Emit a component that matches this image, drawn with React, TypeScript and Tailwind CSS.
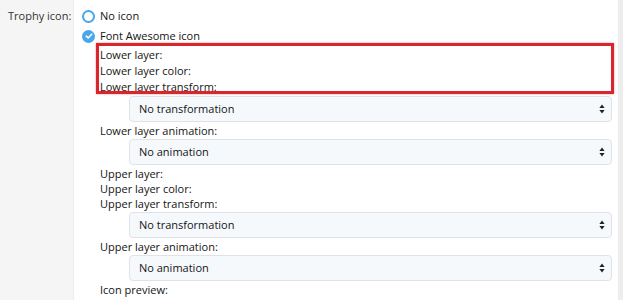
import React from 'react';

const font = { fontFamily: '"Open Sans", "Noto Sans", sans-serif' };

const Select = ({ value }: { value: string }) => (
  <div className="ml-[29px] mr-[6px] my-px h-[26px] flex items-center justify-between pl-[9px] pr-[6px] bg-[#f6f9fc] border border-[#dfe3e8] rounded-[4px] text-[11px] text-[#141414]">
    <span>{value}</span>
    <svg width="6" height="10" viewBox="0 0 6 10" className="fill-[#222]">
      <path d="M3 0.5 L5.6 4 L0.4 4 Z" />
      <path d="M3 9.5 L5.6 6 L0.4 6 Z" />
    </svg>
  </div>
);

const Line = ({ children, tall }: { children: React.ReactNode; tall?: boolean }) => (
  <div className={`${tall ? 'h-[16px] leading-[16px]' : 'h-[15px] leading-[15px]'} whitespace-nowrap text-[11px] text-[#141414]`}>
    {children}
  </div>
);

export default function App() {
  return (
    <div className="relative flex w-[623px] h-[300px] bg-white overflow-hidden" style={font}>
      <div className="w-[74px] shrink-0 bg-[#f5f5f5] border-r border-[#ececec] pl-[8px] pt-[8px]">
        <div className="h-[16px] leading-[16px] whitespace-nowrap text-[11px] text-[#333]">Trophy icon:</div>
      </div>

      <div className="flex-1 pt-[8px] pl-[8px]">
        <div className="flex items-center gap-[5px] h-[16px] text-[11px] text-[#141414]">
          <span className="w-[13px] h-[13px] rounded-full border-2 border-[#47a7eb] bg-white" />
          <span>No icon</span>
        </div>
        <div className="flex items-center gap-[5px] h-[16px] mt-[4px] text-[11px] text-[#141414]">
          <span className="w-[13px] h-[13px] rounded-full bg-[#47a7eb] flex items-center justify-center">
            <svg width="8" height="8" viewBox="0 0 8 8">
              <path d="M1.3 4.2 L3.2 6 L6.7 2.2" fill="none" stroke="white" strokeWidth="1.6" strokeLinecap="round" strokeLinejoin="round" />
            </svg>
          </span>
          <span>Font Awesome icon</span>
        </div>

        <div className="pl-[18px] mt-[3px]">
          <Line tall>Lower layer:</Line>
          <Line tall>Lower layer color:</Line>
          <Line tall>Lower layer transform:</Line>
          <Select value="No transformation" />
          <Line>Lower layer animation:</Line>
          <Select value="No animation" />
          <Line>Upper layer:</Line>
          <Line>Upper layer color:</Line>
          <Line>Upper layer transform:</Line>
          <Select value="No transformation" />
          <Line>Upper layer animation:</Line>
          <Select value="No animation" />
          <Line>Icon preview:</Line>
        </div>
      </div>

      <div className="w-[5px] shrink-0 bg-[#ededed]" />

      <div className="absolute left-[96px] top-[43px] w-[518px] h-[51px] border-[3px] border-[#d9252b] shadow-[0_0_2px_rgba(200,0,0,0.4)] pointer-events-none" />
    </div>
  );
}
